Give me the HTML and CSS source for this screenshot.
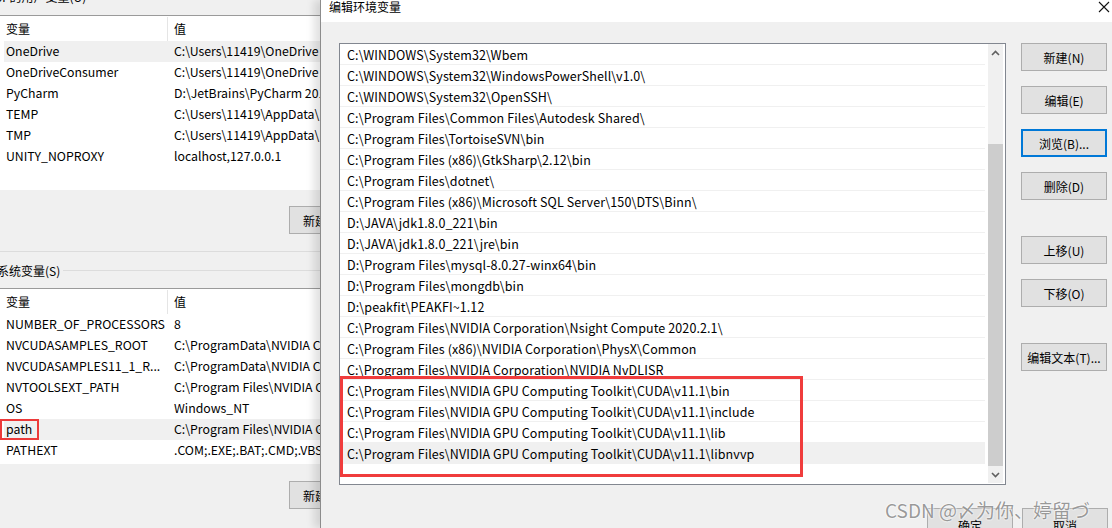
FILE: index.html
```html
<!DOCTYPE html>
<html lang="zh-CN">
<head>
<meta charset="utf-8">
<title>编辑环境变量</title>
<link rel="stylesheet" href="styles.css">
</head>
<body>
<div class="screen">
  <div class="envwin">
    <div class="cut-label"><span>Administrator 的用户变量(U)</span></div>
    <div class="vtable vtable-user">
      <div class="vhead"><div class="c1">变量</div><div class="c2">值</div></div>
      <div class="vrow sel"><div class="c1">OneDrive</div><div class="c2">C:\Users\11419\OneDrive</div></div>
      <div class="vrow"><div class="c1">OneDriveConsumer</div><div class="c2">C:\Users\11419\OneDrive</div></div>
      <div class="vrow"><div class="c1">PyCharm</div><div class="c2">D:\JetBrains\PyCharm 2019.2\bin;</div></div>
      <div class="vrow"><div class="c1">TEMP</div><div class="c2">C:\Users\11419\AppData\Local\Temp</div></div>
      <div class="vrow"><div class="c1">TMP</div><div class="c2">C:\Users\11419\AppData\Local\Temp</div></div>
      <div class="vrow"><div class="c1">UNITY_NOPROXY</div><div class="c2">localhost,127.0.0.1</div></div>
    </div>
    <div class="btnline btnline-user"><button class="wbtn">新建(N)...</button></div>
    <div class="sep"></div>
    <div class="group-title"><span>系统变量(S)</span><i></i></div>
    <div class="vtable vtable-sys">
      <div class="vhead"><div class="c1">变量</div><div class="c2">值</div></div>
      <div class="vrow"><div class="c1">NUMBER_OF_PROCESSORS</div><div class="c2">8</div></div>
      <div class="vrow"><div class="c1">NVCUDASAMPLES_ROOT</div><div class="c2">C:\ProgramData\NVIDIA Corporation</div></div>
      <div class="vrow"><div class="c1">NVCUDASAMPLES11_1_R...</div><div class="c2">C:\ProgramData\NVIDIA Corporation</div></div>
      <div class="vrow"><div class="c1">NVTOOLSEXT_PATH</div><div class="c2">C:\Program Files\NVIDIA Corporation</div></div>
      <div class="vrow"><div class="c1">OS</div><div class="c2">Windows_NT</div></div>
      <div class="vrow sel"><div class="c1"><span class="redbox">path</span></div><div class="c2">C:\Program Files\NVIDIA GPU Computing</div></div>
      <div class="vrow"><div class="c1">PATHEXT</div><div class="c2">.COM;.EXE;.BAT;.CMD;.VBS;.VBE;.JS</div></div>
    </div>
    <div class="btnline btnline-sys"><button class="wbtn">新建(W)...</button></div>
  </div>

  <div class="dialog">
    <div class="titlebar">
      <span class="title">编辑环境变量</span>
      <svg class="close" width="12" height="12" viewBox="0 0 12 12"><path d="M1 1 L11 11 M11 1 L1 11" stroke="#111" stroke-width="1.1" fill="none"/></svg>
    </div>
    <div class="dbody">
      <div class="listbox">
        <div class="items">
          <div class="item">C:\WINDOWS\System32\Wbem</div>
          <div class="item">C:\WINDOWS\System32\WindowsPowerShell\v1.0\</div>
          <div class="item">C:\WINDOWS\System32\OpenSSH\</div>
          <div class="item">C:\Program Files\Common Files\Autodesk Shared\</div>
          <div class="item">C:\Program Files\TortoiseSVN\bin</div>
          <div class="item">C:\Program Files (x86)\GtkSharp\2.12\bin</div>
          <div class="item">C:\Program Files\dotnet\</div>
          <div class="item">C:\Program Files (x86)\Microsoft SQL Server\150\DTS\Binn\</div>
          <div class="item">D:\JAVA\jdk1.8.0_221\bin</div>
          <div class="item">D:\JAVA\jdk1.8.0_221\jre\bin</div>
          <div class="item">D:\Program Files\mysql-8.0.27-winx64\bin</div>
          <div class="item">D:\Program Files\mongdb\bin</div>
          <div class="item">D:\peakfit\PEAKFI~1.12</div>
          <div class="item">C:\Program Files\NVIDIA Corporation\Nsight Compute 2020.2.1\</div>
          <div class="item">C:\Program Files (x86)\NVIDIA Corporation\PhysX\Common</div>
          <div class="item">C:\Program Files\NVIDIA Corporation\NVIDIA NvDLISR</div>
          <div class="item">C:\Program Files\NVIDIA GPU Computing Toolkit\CUDA\v11.1\bin</div>
          <div class="item">C:\Program Files\NVIDIA GPU Computing Toolkit\CUDA\v11.1\include</div>
          <div class="item">C:\Program Files\NVIDIA GPU Computing Toolkit\CUDA\v11.1\lib</div>
          <div class="item sel">C:\Program Files\NVIDIA GPU Computing Toolkit\CUDA\v11.1\libnvvp</div>
        </div>
        <div class="scrollbar">
          <svg class="arrow" width="9" height="6" viewBox="0 0 9 6"><path d="M1 5 L4.5 1.5 L8 5" stroke="#606060" stroke-width="1.6" fill="none"/></svg>
          <div class="track"><div class="thumb"></div></div>
          <svg class="arrow" width="9" height="6" viewBox="0 0 9 6"><path d="M1 1 L4.5 4.5 L8 1" stroke="#606060" stroke-width="1.6" fill="none"/></svg>
        </div>
        <div class="redframe"></div>
      </div>
      <div class="side">
        <button class="wbtn">新建(N)</button>
        <button class="wbtn">编辑(E)</button>
        <button class="wbtn focus">浏览(B)...</button>
        <button class="wbtn">删除(D)</button>
        <button class="wbtn gap">上移(U)</button>
        <button class="wbtn">下移(O)</button>
        <button class="wbtn gap">编辑文本(T)...</button>
      </div>
    </div>
    <div class="dfoot">
      <button class="wbtn">确定</button>
      <button class="wbtn">取消</button>
    </div>
    <div class="watermark">CSDN @〆为你、婷留づ</div>
  </div>
</div>
</body>
</html>
```

FILE: styles.css
```css
* { box-sizing: border-box; }
html, body { margin: 0; padding: 0; }
body {
  width: 1112px;
  height: 528px;
  overflow: hidden;
  background: #f0f0f0;
  font-family: "Noto Sans CJK SC", "Noto Sans", sans-serif;
  font-size: 12px;
  color: #000;
}
.screen {
  display: flex;
  width: 1112px;
  height: 528px;
}

/* background window */
.envwin {
  width: 320px;
  flex: none;
  overflow: hidden;
  background: #f0f0f0;
}
.cut-label {
  height: 15px;
  overflow: hidden;
  white-space: nowrap;
}
.cut-label span {
  display: block;
  margin-top: -11px;
  margin-left: -70px;
  line-height: 16px;
}
.vtable {
  width: 460px;
  background: #fff;
  border-top: 1px solid #9a9a9a;
}
.vtable-user { height: 175px; }
.vtable-sys { height: 176px; }
.vhead {
  display: flex;
  height: 25px;
  align-items: center;
}
.vhead .c1 {
  border-right: 1px solid #e5e5e5;
  height: 24px;
  line-height: 24px;
}
.vrow {
  display: flex;
  height: 21px;
  line-height: 20px;
  margin-left: 4px;
  white-space: nowrap;
  font-size: 12.3px;
}
.vtable-sys .vrow { line-height: 21px; }
.vrow.sel { background: #f0f0f0; }
.c1 { width: 168px; padding-left: 6px; flex: none; }
.vrow .c1 { width: 164px; padding-left: 2px; }
.c2 { padding-left: 6px; white-space: nowrap; }
.redbox {
  display: inline-block;
  margin-left: -6px;
  padding: 0 5px 0 4px;
  height: 21px;
  line-height: 17px;
  border: 2px solid #ec3a3a;
}
.btnline {
  display: flex;
  padding-left: 289px;
}
.btnline-user { margin-top: 16px; }
.btnline-sys { margin-top: 17px; }
.wbtn {
  width: 86px;
  height: 28px;
  flex: none;
  border: 1px solid #adadad;
  background: #e1e1e1;
  font-family: "Noto Sans CJK SC", "Noto Sans", sans-serif;
  font-size: 12px;
  color: #000;
  padding: 0;
  margin: 0;
  white-space: nowrap;
  text-align: center;
}
.btnline .wbtn { text-align: left; padding-left: 13px; }
.sep {
  height: 1px;
  margin-top: 17px;
  background: #dcdcdc;
}
.group-title {
  display: flex;
  align-items: center;
  height: 36px;
  margin-left: -3px;
}
.group-title span { white-space: nowrap; padding-right: 3px; }
.group-title i { flex: 1; height: 1px; background: #dcdcdc; }

/* dialog */
.dialog {
  position: relative;
  flex: 1;
  height: 528px;
  background: #f0f0f0;
  border-left: 1px solid #8c8c8c;
  box-shadow: -6px 0 8px rgba(0, 0, 0, 0.12);
}
.titlebar {
  display: flex;
  justify-content: space-between;
  align-items: flex-start;
  height: 22px;
  background: #fff;
  padding: 0 2px 0 8px;
}
.title { line-height: 14px; }
.close { margin-top: 1px; }
.dbody {
  display: flex;
  padding: 21px 0 0 18px;
}
.listbox {
  position: relative;
  width: 667px;
  height: 442px;
  border: 1px solid #828790;
  background: #fff;
  display: flex;
}
.items { flex: 1; }
.item {
  height: 21px;
  line-height: 21px;
  padding-left: 7px;
  border-bottom: 1px solid #f0f0f0;
  white-space: nowrap;
  font-size: 12.5px;
  letter-spacing: 0.1px;
}
.item.sel { background: #f0f0f0; }
.scrollbar {
  width: 15px;
  margin: 0 2px 1px 3px;
  background: #f0f0f0;
  display: flex;
  flex-direction: column;
  align-items: center;
}
.arrow { margin: 6px 0 5px; flex: none; }
.track { flex: 1; width: 100%; display: flex; flex-direction: column; justify-content: flex-end; }
.thumb { height: 322px; background: #cdcdcd; }
.redframe {
  position: absolute;
  left: 0;
  top: 332px;
  width: 463px;
  height: 101px;
  border: 3px solid #f03c3c;
}
.side {
  display: flex;
  flex-direction: column;
  padding-left: 15px;
}
.side .wbtn { margin-top: 15px; }
.side .wbtn:first-child { margin-top: 0; }
.side .wbtn.gap { margin-top: 36px; }
.side .wbtn.focus { border: 2px solid #0078d7; }
.dfoot {
  display: flex;
  gap: 9px;
  padding: 23px 0 0 606px;
}
.dfoot .wbtn { padding-top: 6px; }
.watermark {
  position: absolute;
  left: 564px;
  top: 496px;
  font-family: "Noto Sans CJK SC", sans-serif;
  font-size: 19px;
  color: rgba(120, 120, 120, 0.75);
  text-shadow: 0 0 2px #fff, 0 0 2px #fff;
  white-space: nowrap;
  pointer-events: none;
}
```
